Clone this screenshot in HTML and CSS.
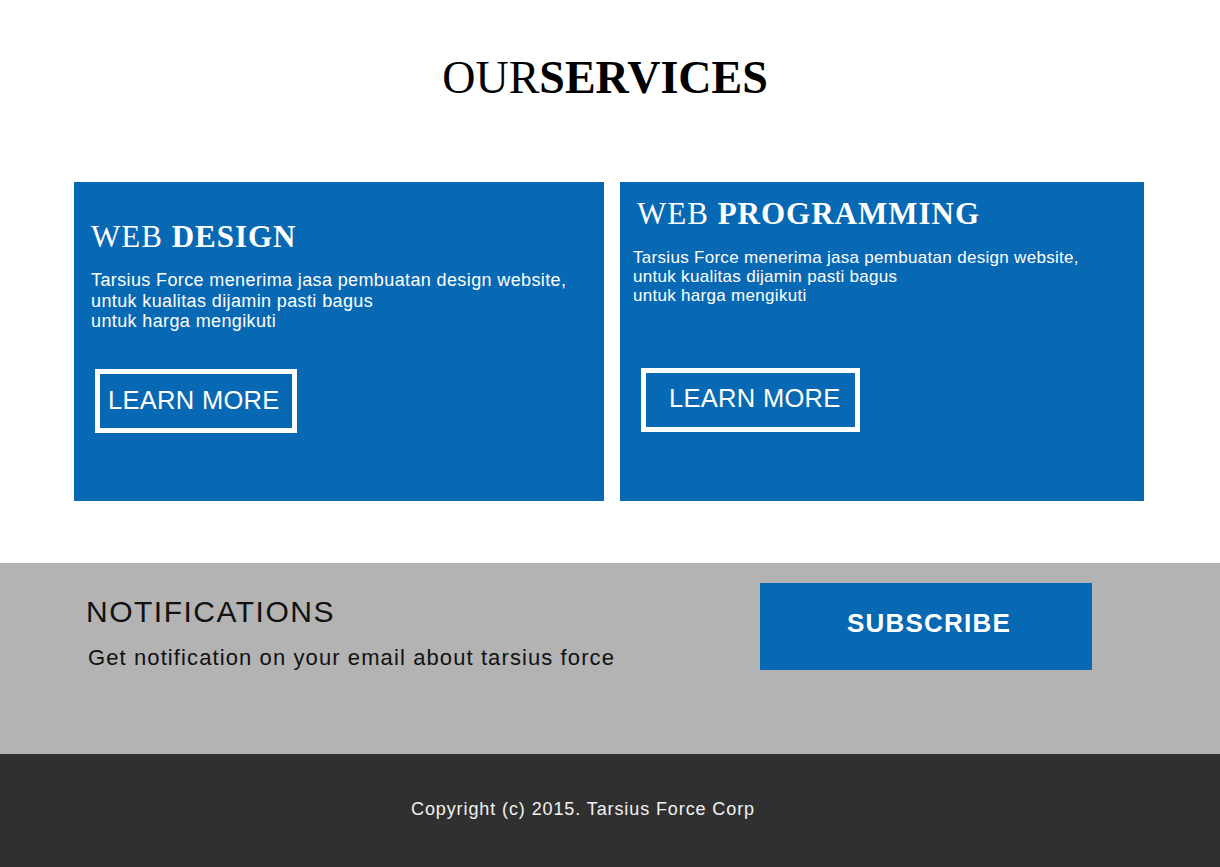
FILE: index.html
```html
<!DOCTYPE html>
<html lang="id">
<head>
<meta charset="utf-8">
<title>Tarsius Force - Our Services</title>
<link rel="stylesheet" href="styles.css">
</head>
<body>
<section class="services">
  <h1 class="services-title">OUR<strong>SERVICES</strong></h1>
  <div class="cards">
    <div class="card card-design">
      <h2 class="card-title">WEB <strong>DESIGN</strong></h2>
      <p class="card-text">Tarsius Force menerima jasa pembuatan design website,<br>untuk kualitas dijamin pasti bagus<br>untuk harga mengikuti</p>
      <a class="btn-outline" href="#">LEARN MORE</a>
    </div>
    <div class="card card-prog">
      <h2 class="card-title">WEB <strong>PROGRAMMING</strong></h2>
      <p class="card-text">Tarsius Force menerima jasa pembuatan design website,<br>untuk kualitas dijamin pasti bagus<br>untuk harga mengikuti</p>
      <a class="btn-outline" href="#">LEARN MORE</a>
    </div>
  </div>
</section>
<section class="notify">
  <div class="notify-info">
    <h2 class="notify-title">NOTIFICATIONS</h2>
    <p class="notify-text">Get notification on your email about tarsius force</p>
  </div>
  <a class="btn-subscribe" href="#">SUBSCRIBE</a>
</section>
<footer class="footer">
  <p class="copyright">Copyright (c) 2015. Tarsius Force Corp</p>
</footer>
</body>
</html>
```
FILE: styles.css
```css
* { box-sizing: border-box; }
html, body { margin: 0; padding: 0; }
body {
  background: #ffffff;
  font-family: "Liberation Sans", Arial, sans-serif;
  color: #000;
}
a { text-decoration: none; }

.services {
  height: 563px;
  padding-top: 50px;
}
.services-title {
  margin: 0;
  padding-right: 10px;
  font-family: "Liberation Serif", "Times New Roman", serif;
  font-weight: normal;
  font-size: 46px;
  line-height: 56px;
  text-align: center;
  color: #000;
}
.services-title strong { font-weight: bold; }

.cards {
  display: flex;
  gap: 16px;
  margin-top: 76px;
  padding-left: 74px;
}
.card {
  background: #0769b4;
  height: 319px;
  color: #fff;
  display: flex;
  flex-direction: column;
  align-items: flex-start;
}
.card-design { width: 530px; padding: 35px 0 0 17px; }
.card-prog { width: 524px; padding: 12px 0 0 13px; }

.card-title {
  margin: 0;
  font-family: "Liberation Serif", "Times New Roman", serif;
  font-weight: normal;
  font-size: 31px;
  line-height: 40px;
  letter-spacing: 1px;
}
.card-title strong { font-weight: bold; }
.card-prog .card-title { padding-left: 4px; }

.card-text {
  margin: 0;
  letter-spacing: 0.3px;
}
.card-design .card-text { font-size: 18px; line-height: 20.5px; margin-top: 13px; letter-spacing: 0.38px; }
.card-prog .card-text { font-size: 17px; line-height: 19px; margin-top: 14px; }

.btn-outline {
  display: block;
  height: 64px;
  border: 5px solid #fff;
  color: #fff;
  font-size: 25.5px;
  line-height: 54px;
  letter-spacing: 0.3px;
  white-space: nowrap;
}
.card-design .btn-outline { width: 202px; margin: 37px 0 0 4px; padding-left: 8px; line-height: 52px; }
.card-prog .btn-outline { width: 219px; margin: 63px 0 0 8px; padding-left: 23px; line-height: 50px; }

.notify {
  height: 191px;
  background: #b3b3b3;
  display: flex;
  justify-content: space-between;
  align-items: flex-start;
  padding: 20px 128px 0 86px;
}
.notify-info { padding-top: 11px; }
.notify-title {
  margin: 0;
  font-weight: normal;
  font-size: 30px;
  line-height: 36px;
  letter-spacing: 1.5px;
  color: #111;
}
.notify-text {
  margin: 14px 0 0 2px;
  font-size: 22px;
  line-height: 28px;
  letter-spacing: 1.1px;
  color: #111;
}
.btn-subscribe {
  width: 332px;
  height: 87px;
  background: #0769b4;
  color: #fff;
  font-weight: bold;
  font-size: 26px;
  letter-spacing: 1.2px;
  line-height: 80px;
  text-align: center;
  padding-left: 6px;
}

.footer {
  height: 113px;
  background: #303030;
  padding-top: 44px;
}
.copyright {
  margin: 0;
  color: #f2f2f2;
  font-size: 18px;
  line-height: 22px;
  letter-spacing: 0.9px;
  text-align: center;
  padding-right: 54px;
}
```
